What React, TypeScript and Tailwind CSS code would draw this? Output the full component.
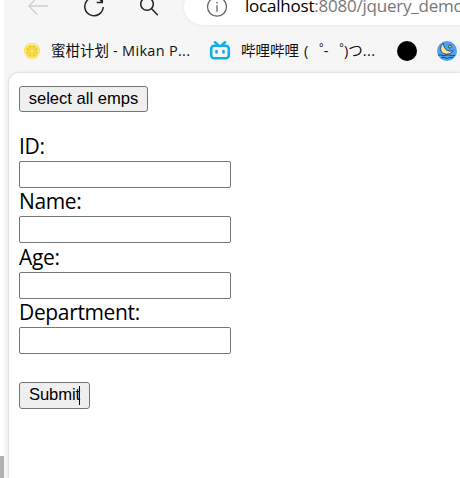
const ui = "font-['Open_Sans','Noto_Sans_CJK_SC',sans-serif]";

function Toolbar() {
  return (
    <div className="flex h-[25px] pl-[20px]">
      <svg className="mt-[-6px] h-[24px] w-[24px] shrink-0" viewBox="0 0 24 24" fill="none" stroke="#cfcfcf" strokeWidth="1.3">
        <path d="M13 3.5L5 12l8 8.5M5 12h20" />
      </svg>
      <svg className="ml-[33px] mt-[-6px] h-[26px] w-[26px] shrink-0" viewBox="0 0 26 26" fill="none" stroke="#222" strokeWidth="1.5">
        <path d="M20.7 7.5A9.2 9.2 0 1 0 22.2 13M21.3 3v5.6h-5.6" />
      </svg>
      <svg className="ml-[31px] mt-[-4px] h-[24px] w-[24px] shrink-0" viewBox="0 0 24 24" fill="none" stroke="#222" strokeWidth="1.5">
        <circle cx="9" cy="8" r="6.3" />
        <path d="M13.4 12.5l6.4 6.7" />
      </svg>
      <div className="ml-[22px] mt-[-13px] flex h-[38px] w-[400px] shrink-0 items-center rounded-l-full bg-white pl-[22px] shadow-[0_0_4px_rgba(0,0,0,0.08)]">
        <svg className="h-[22px] w-[22px] shrink-0" viewBox="0 0 22 22" fill="none" stroke="#666" strokeWidth="1.3">
          <circle cx="11" cy="11.7" r="9.5" />
          <path d="M11 10.2v6.5M11 6.7v1.8" />
        </svg>
        <span className={`ml-[17px] whitespace-nowrap text-[17px] leading-[24px] tracking-[-0.22px] text-[#777] ${ui}`}>
          <span className="text-black">localhost</span>:8080/jquery_demo
        </span>
      </div>
    </div>
  );
}

function Bookmarks() {
  return (
    <div className={`flex h-[48px] items-center overflow-hidden whitespace-nowrap pl-[20px] pt-[4px] text-[14.5px] text-[#111] ${ui}`}>
      <svg className="h-[16px] w-[16px] shrink-0" viewBox="0 0 16 16">
        <circle cx="8" cy="8" r="8" fill="#f6d94b" />
        <circle cx="8" cy="8" r="7.2" fill="#fdf3b0" />
        <circle cx="8" cy="8" r="6.2" fill="#f3cf2a" />
        <path d="M8 2v12M2 8h12M3.8 3.8l8.4 8.4M12.2 3.8l-8.4 8.4" stroke="#fae985" strokeWidth=".8" />
      </svg>
      <span className="ml-[11px] w-[139px] shrink-0">蜜柑计划<span className="tracking-[0.3px]"> - Mikan P...</span></span>
      <svg className="ml-[19px] h-[20px] w-[22px] shrink-0" viewBox="0 0 22 20" fill="none" stroke="#12aee8" strokeWidth="2.6" strokeLinecap="round">
        <rect x="2.2" y="4.7" width="17.6" height="12.6" rx="3" />
        <path d="M6 1.3L8.5 3.5M16 1.3L13.5 3.5M7.5 10v1.5M14.5 10v1.5" />
      </svg>
      <span className="ml-[10px] w-[136px] shrink-0">
        哔哩哔哩
        <span className="ml-[5px]">(</span>
        <span className="inline-block w-[15.5px] indent-[11px]">゜</span>-
        <span className="inline-block w-[15.5px] indent-[11px]">゜</span>)つ<span className="tracking-[0.5px]">...</span>
      </span>
      <span className="ml-[20px] h-[20px] w-[20px] shrink-0 rounded-full bg-black" />
      <svg className="ml-[20px] h-[20px] w-[20px] shrink-0" viewBox="0 0 20 20" fill="none" stroke="#2a3b52" strokeWidth="0.9">
        <circle cx="10" cy="10" r="10" fill="#4ba3f5" stroke="none" />
        <path d="M6.5 2.5C2.5 5 3 10 5.5 12C8 14 14.5 13.5 16 9.5C11 11.5 6.5 8 6.5 2.5Z" fill="#f7e495" />
        <circle cx="13" cy="5.5" r="1.5" fill="#d9d596" />
        <path d="M1 14.3q2-1 4 0t4 0 4 0 5 0M4 16.8q2-1 4 0t4 0 4 0" />
      </svg>
    </div>
  );
}

function Field({ label }: { label: string }) {
  return (
    <label className="block h-[55.3px]">
      <span className="block h-[28px] text-[21px] leading-[26px] tracking-[-0.35px]">{label}</span>
      <input className="block h-[27px] w-[212px] rounded-[2px] border border-[#767676] bg-white px-1 outline-none" />
    </label>
  );
}

export default function App() {
  return (
    <div className="flex h-[478px] w-[460px] overflow-hidden bg-white">
      <div className="flex w-[4px] shrink-0 flex-col justify-end">
        <div className="h-[22px] bg-[#b1b1b1]" />
      </div>
      <div className="flex min-w-0 flex-1 flex-col bg-[#f6f6f6]">
        <Toolbar />
        <Bookmarks />
        <main className={`ml-[5px] flex-1 rounded-tl-[10px] bg-white pl-[10px] pt-[13px] text-black shadow-[0_0_3px_rgba(0,0,0,0.22)] ${ui}`}>
          <button className="block h-[26px] w-[129px] whitespace-nowrap rounded-[3px] border border-[#767676] bg-[#efefef] font-['Liberation_Sans',sans-serif] text-[16.6px] leading-[22px]">
            select all emps
          </button>
          <form className="mt-[21px]">
            <Field label="ID:" />
            <Field label="Name:" />
            <Field label="Age:" />
            <Field label="Department:" />
            <button type="button" className="mt-[28px] flex h-[27px] w-[71px] rounded-[3px] border border-[#767676] bg-[#efefef] pl-[9px] pt-[1px] font-['Liberation_Sans',sans-serif] text-[16.6px] leading-[22px] tracking-[-0.1px]">
              Submit
              <span className="-ml-px mt-[2px] h-[19px] w-px shrink-0 bg-black" />
            </button>
          </form>
        </main>
      </div>
    </div>
  );
}
